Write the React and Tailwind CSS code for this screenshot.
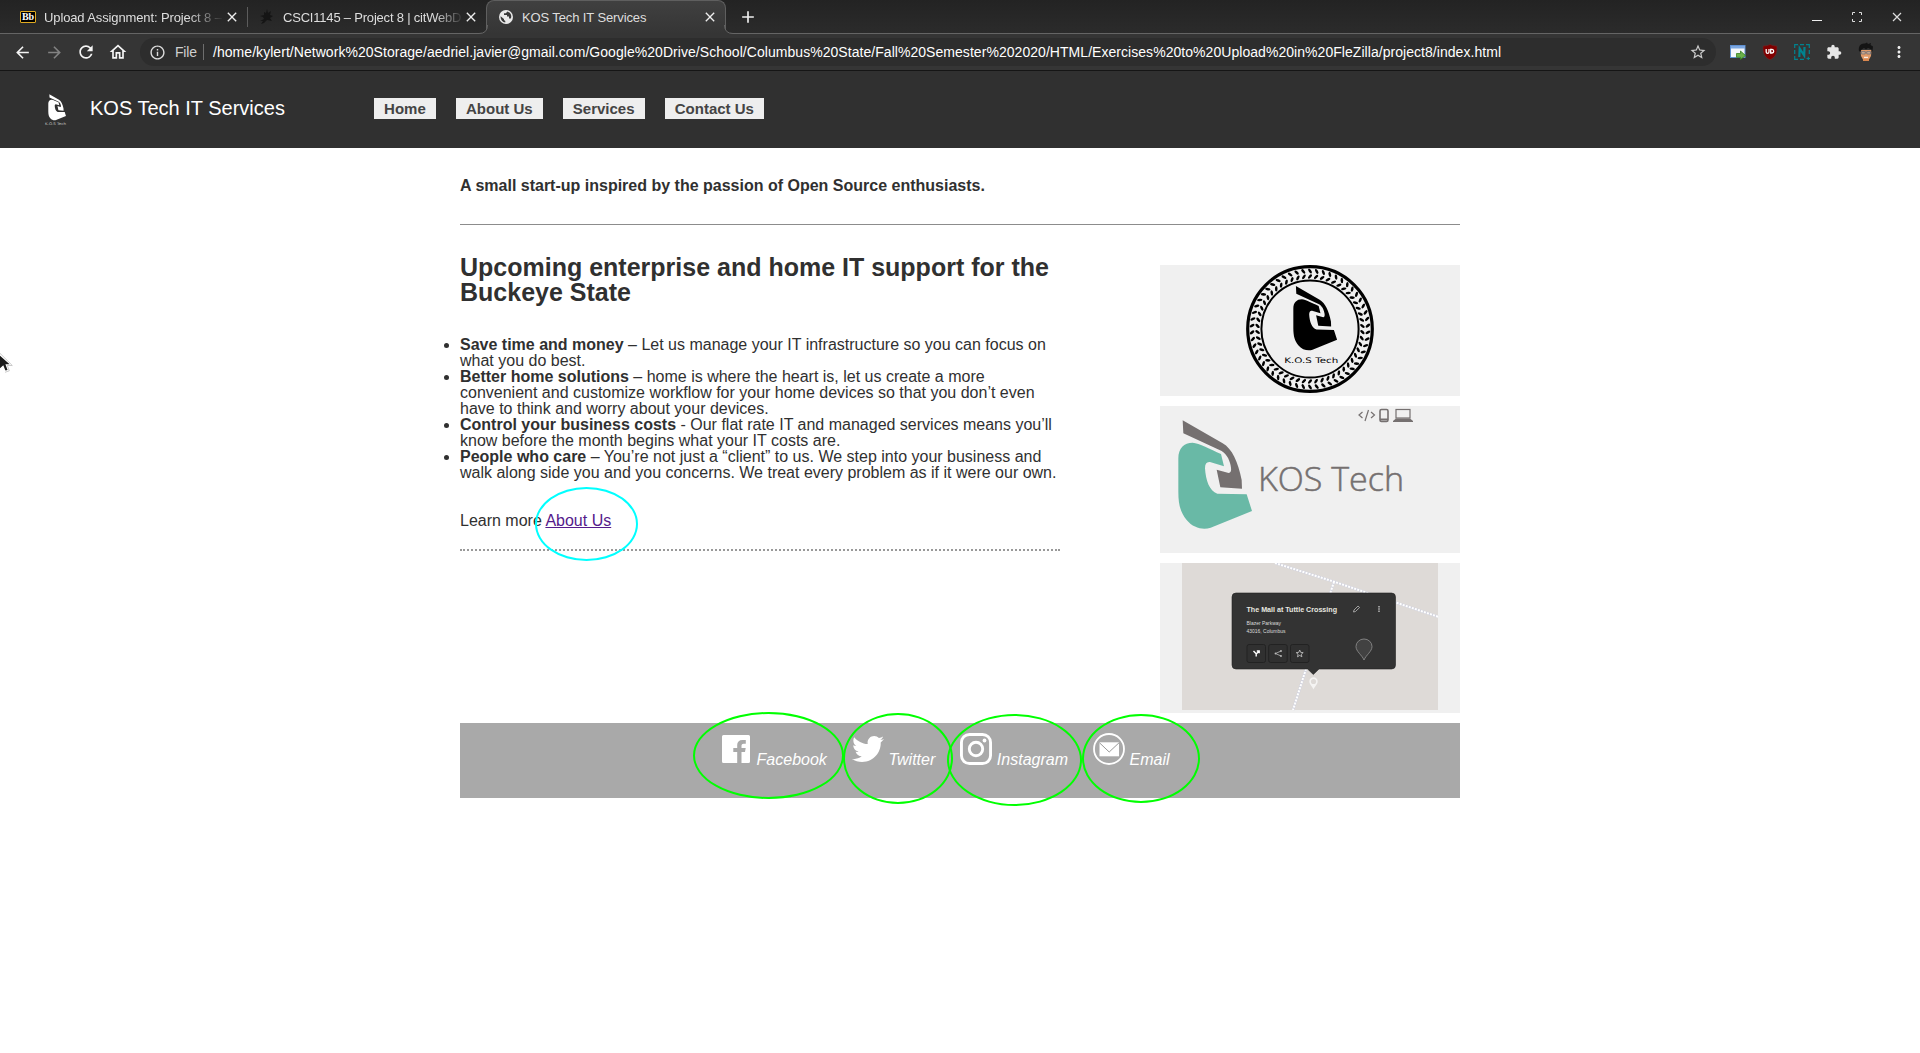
import React from "react";
import {
  MdArrowBack,
  MdArrowForward,
  MdRefresh,
  MdOutlineHome,
  MdInfoOutline,
  MdStarBorder,
  MdExtension,
  MdClose,
  MdAdd,
  MdMoreVert,
} from "react-icons/md";
import { FaTwitter } from "react-icons/fa";

const VISOR =
  "M98 61 L218 130 C246 146 264 185 275 240 L276 266 L211 262 L200 209 L236 219 Q245 218 243 203 C241 185 232 163 215 153 L100 100 Z";
const SHELL =
  "M85 175 C85 145 102 128 128 128 C148 130 180 147 213 162 L222 199 L180 186 Q165 184 165 205 C167 240 178 274 202 281 L290 283 L306 333 L182 383 C160 390 130 385 110 360 C92 338 85 315 85 275 Z";

function Helmet({ visor, shell, transform }) {
  return (
    <g transform={transform}>
      <path d={VISOR} fill={visor} />
      <path d={SHELL} fill={shell} />
    </g>
  );
}

function TabFoot({ flip }) {
  return (
    <svg
      className={flip ? "absolute -right-2 bottom-0" : "absolute -left-2 bottom-0 -scale-x-100"}
      width="9"
      height="9"
      viewBox="0 0 9 9"
    >
      <path d="M0 0 H0.5 Q0.5 8.5 9 8.5 V9 H0 Z" fill="#353535" />
      <path d="M0.5 0 Q0.5 8.5 9 8.5" fill="none" stroke="#656565" />
    </svg>
  );
}

function TabStrip() {
  return (
    <div className="flex h-[34px] border-b border-[#656565] bg-linear-to-b from-[#232323] to-[#2b2b2b] text-[13px] tracking-[-0.12px] text-[#dedede]">
      <div className="flex h-[33px] w-[247px] items-center pl-5">
        <div className="flex h-3 w-4 items-center justify-center rounded-[1px] border border-[#e0aa20] bg-black font-['Liberation_Serif',serif] text-[10px] leading-none font-bold text-white">
          Bb
        </div>
        <div className="mt-0.5 ml-2 w-[180px] mask-r-from-80% whitespace-nowrap">
          Upload Assignment: Project 8 –
        </div>
        <MdClose className="size-4 text-[#eeeeee]" />
      </div>
      <div className="mt-[7px] h-5 w-px bg-[#5c5c5c]" />
      <div className="flex h-[33px] w-[238px] items-center pl-3">
        <svg width="14" height="16" viewBox="0 0 14 16">
          <path
            d="M7 0 L8 4 L11 2 L10 6 L13 7 L10 9 L12 12 L7 11 L4 14 L1 15 L3 12 L0 12 L4 10 L3 8 L0 7 L4 6 L4 3 L6 4 Z"
            fill="#151515"
          />
        </svg>
        <div className="mt-0.5 ml-[9px] w-[181px] mask-r-from-84% tracking-[-0.2px] whitespace-nowrap">
          CSCI1145 – Project 8 | citWebD
        </div>
        <MdClose className="-ml-px size-4 text-[#eeeeee]" />
      </div>
      <div className="relative -mb-px flex h-[34px] w-[240px] items-center rounded-t-lg border-x border-t border-[#5f5f5f] bg-linear-to-b from-[#404040] to-[#353535] pb-px pl-3">
        <TabFoot />
        <TabFoot flip />
        <svg width="14" height="14" viewBox="0 0 14 14">
          <circle cx="7" cy="7" r="7" fill="#e8e8e8" />
          <path
            d="M1.6 6.2 L5 9 V10 L6.3 11 V12.6 C3.4 12.2 1.2 9.6 1.6 6.2 Z M8.2 1.6 L7 3.2 H5 V5 H8 V6.6 H10 V8.6 H11.8 C13 6 12 2.6 8.2 1.6 Z"
            fill="#383838"
          />
        </svg>
        <span className="mt-px ml-[9px] w-[180px]">KOS Tech IT Services</span>
        <MdClose className="size-4 text-[#eeeeee]" />
      </div>
      <MdAdd className="mt-[7px] ml-3 size-5 text-[#eeeeee]" />
      <div className="ml-auto flex h-[33px] items-center pr-[18px] text-[#dddddd]">
        <div className="mt-2 h-px w-[10px] bg-[#eeeeee]" />
        <svg className="ml-[30px]" width="10" height="10" viewBox="0 0 10 10" fill="none" stroke="currentColor">
          <path d="M.5 3V.5H3 M7 .5H9.5V3 M9.5 7V9.5H7 M3 9.5H.5V7" />
        </svg>
        <svg className="ml-[30px]" width="10" height="10" viewBox="0 0 10 10" fill="none" stroke="currentColor" strokeWidth="1.2">
          <path d="M1 1L9 9M9 1L1 9" />
        </svg>
      </div>
    </div>
  );
}

function Extensions() {
  return (
    <div className="ml-[14px] flex items-center gap-4">
      <svg width="16" height="16" viewBox="0 0 16 16">
        <rect x=".5" y="1.5" width="14.5" height="12" fill="#f4f6fa" stroke="#5e8fd0" />
        <path d="M1 2H15V4.500H1Z" fill="#7ba6e0" />
        <path d="M6.500 9.500H10.500V7L15.500 11.500L10.500 15.500V13.300H6.500Z" fill="#6ab04a" stroke="#35801c" strokeWidth=".8" />
      </svg>
      <svg width="16" height="16" viewBox="0 0 16 16">
        <path d="M8 .3C10 1.600 12.500 2 15 2C15.200 9 14 13 8 15.800C2 13 .8 9 1 2C3.500 2 6 1.600 8 .3Z" fill="#800000" stroke="#5e3030" strokeWidth=".6" />
        <path d="M4.200 5V8Q4.200 9.300 5.600 9.300Q7 9.300 7 8V5M8.700 5.400H10Q11.700 5.600 11.700 7.200Q11.700 8.800 10 9H8.700Z" fill="none" stroke="#fff" strokeWidth="1.300" />
      </svg>
      <svg width="16" height="16" viewBox="0 0 16 16" fill="none" stroke="#00838f">
        <path d="M.7 4V.7H4M6 .7H10M12 .7H15.300V4M15.300 6V10M.7 6V10M.7 12V15.300H4M6 15.300H10M12.500 14.500H16M14.300 12.700V16" strokeWidth="1.200" />
        <path d="M5.300 13L5.700 4.500L10.200 11.500L10.500 3" strokeWidth="2.200" />
      </svg>
      <MdExtension className="size-4 text-[#e6e6e6]" />
      <svg width="16" height="20" viewBox="0 0 16 20">
        <path d="M2.500 8H13.500L13 14L10.500 18.500H5.500L3 14Z" fill="#e09a68" />
        <path d="M5 17H11V19H5Z" fill="#d9874f" />
        <path d="M1 9C0 4 3 1 7 1.500L9 .5L10 2L13 1L12.500 3L15 4.500L14.500 9L13.500 10V7.500L10 6L8 7.500L6 6L3.500 7.500L2.500 10Z" fill="#141414" />
        <path d="M3.500 9.500H7.200V12H3.500ZM8.800 9.500H12.500V12H8.800ZM7.200 10.300H8.800" fill="#c8a68c" stroke="#6b7078" strokeWidth=".7" />
        <path d="M6 15.300H10" stroke="#fff" />
      </svg>
      <MdMoreVert className="size-[18px] text-[#eeeeee]" />
    </div>
  );
}

function Toolbar() {
  return (
    <div className="flex h-[37px] items-center border-b border-[#151515] bg-[#353535] pl-[13px]">
      <div className="flex items-center text-[18px] text-[#f5f5f5]">
        <MdArrowBack className="size-[19px]" />
        <MdArrowForward className="ml-[13px] size-[19px] text-[#828282]" />
        <MdRefresh className="ml-3 size-5" />
        <MdOutlineHome className="ml-3 size-5" />
      </div>
      <div className="ml-3 flex h-7 w-[1576px] items-center rounded-full bg-[#2d2d2d] pr-[9px] pl-[9px] text-[14px] text-white">
        <MdInfoOutline className="size-[17px] text-[#dddddd]" />
        <span className="ml-[9px] w-[28px] tracking-[-0.2px] text-[#cfcfcf]">File</span>
        <div className="h-4 w-px bg-[#6e6e6e]" />
        <span className="ml-[9px] tracking-[0.047px] whitespace-nowrap">
          /home/kylert/Network%20Storage/aedriel.javier@gmail.com/Google%20Drive/School/Columbus%20State/Fall%20Semester%202020/HTML/Exercises%20to%20Upload%20in%20FleZilla/project8/index.html
        </span>
        <MdStarBorder className="ml-auto size-[18px] text-[#cccccc]" />
      </div>
      <Extensions />
    </div>
  );
}

function SiteHeader() {
  return (
    <header className="flex h-[77px] items-center bg-[#303030] pl-[44px]">
      <svg width="24" height="34" viewBox="0 0 24 34" className="mt-px">
        <Helmet visor="#fff" shell="#fff" transform="translate(-2.500 -3.600) scale(.08)" />
        <text x="1" y="32" fontSize="3.600" fill="#c5c5c5" textLength="21" lengthAdjust="spacingAndGlyphs" fontFamily="DejaVu Sans, sans-serif">
          K.O.S Tech
        </text>
      </svg>
      <h1 className="mb-1 ml-[22px] w-[284px] text-[20px] leading-6 text-white">KOS Tech IT Services</h1>
      <nav className="mb-[3px] flex gap-5 text-[15px] leading-[21px] font-bold text-[#444444]">
        {["Home", "About Us", "Services", "Contact Us"].map((label) => (
          <a key={label} className="bg-[#eeeeee] px-[10.1px]">
            {label}
          </a>
        ))}
      </nav>
    </header>
  );
}

const POINTS = [
  ["Save time and money", " – Let us manage your IT infrastructure so you can focus on what you do best."],
  [
    "Better home solutions",
    " – home is where the heart is, let us create a more convenient and customize workflow for your home devices so that you don’t even have to think and worry about your devices.",
  ],
  [
    "Control your business costs",
    " - Our flat rate IT and managed services means you’ll know before the month begins what your IT costs are.",
  ],
  [
    "People who care",
    " – You’re not just a “client” to us. We step into your business and walk along side you and you concerns. We treat every problem as if it were our own.",
  ],
];

function Article() {
  return (
    <article className="w-[600px] pt-[30px]">
      <h2 className="text-[25px] leading-[25px] font-bold">
        Upcoming enterprise and home IT support for the Buckeye State
      </h2>
      <ul className="mt-8 list-disc leading-4">
        {POINTS.map(([lead, rest]) => (
          <li key={lead}>
            <b>{lead}</b>
            {rest}
          </li>
        ))}
      </ul>
      <p className="mt-8 leading-4">
        Learn more{" "}
        <span className="relative">
          <a className="text-[#551a8b] underline">About Us</a>
          <span className="absolute -top-[25px] -left-[10px] h-[74px] w-[103px] rounded-[50%] border-2 border-[#00ffff]" />
        </span>
      </p>
      <div className="mt-[20px] border-t-2 border-dotted border-[#999999]" />
    </article>
  );
}

const LEAVES = Array.from({ length: 54 }, (_, i) => (i * 360) / 54);

function Badge() {
  return (
    <svg width="300" height="131" viewBox="0 0 300 131" className="block bg-[#f0f0f0]">
      <g fill="none" stroke="#000">
        <circle cx="150" cy="64" r="62.300" strokeWidth="3.200" />
        <circle cx="150" cy="64" r="48.600" strokeWidth="2" />
      </g>
      {LEAVES.map((a) => (
        <g key={a} transform={`rotate(${a} 150 64)`}>
          <ellipse cx="150" cy="6" rx="2.700" ry="1.300" transform="rotate(55 150 6)" />
          <ellipse cx="150" cy="11.500" rx="2.700" ry="1.300" transform="rotate(-50 150 11.500)" />
        </g>
      ))}
      <Helmet visor="#000" shell="#000" transform="translate(116.500 8.900) scale(.198)" />
      <text x="124.300" y="97.600" fontSize="7.600" textLength="54" lengthAdjust="spacingAndGlyphs" fontFamily="DejaVu Sans, sans-serif">
        K.O.S Tech
      </text>
    </svg>
  );
}

function Banner() {
  return (
    <svg width="300" height="147" viewBox="0 0 300 147" className="block bg-[#f0f0f0]">
      <Helmet visor="#757070" shell="#69b9a6" transform="translate(-10 -6) scale(.33333)" />
      <text
        x="98"
        y="84.700"
        fontSize="32.600"
        fontWeight="300"
        fill="#757070"
        stroke="#757070"
        strokeWidth=".5"
        textLength="146"
        lengthAdjust="spacingAndGlyphs"
        fontFamily="Open Sans, sans-serif"
      >
        KOS Tech
      </text>
      <g fill="none" stroke="#757070" strokeWidth="1.200">
        <path d="M202.500 6L199 9L202.500 12M211 6L214.500 9L211 12M208.500 4L205 15" />
        <rect x="220" y="3.500" width="8" height="12" rx="1.500" strokeWidth="1.600" />
        <path d="M220 13.500H228" strokeWidth="2" />
        <rect x="236" y="3.500" width="14" height="8.500" />
      </g>
      <path d="M236 12.500H250L253 15V16H233V15Z" fill="#757070" />
    </svg>
  );
}

function MapCard() {
  return (
    <svg width="300" height="150" viewBox="0 0 300 150" className="block bg-[#f0f0f0]" fontFamily="Liberation Sans, sans-serif">
      <rect x="22" width="256" height="147" fill="#dedad7" />
      <g fill="none">
        <path d="M115 0L174 18.700L278 53.700M174 18.700L170 31M146 106L133 147" stroke="#d3d4df" strokeWidth="2.600" />
        <path d="M115 0L174 18.700L278 53.700M174 18.700L170 31M146 106L133 147" stroke="#fff" strokeWidth="2" strokeDasharray="2 1.200" />
      </g>
      <path d="M76 30H231.500Q235.500 30 235.500 34V102Q235.500 106 231.500 106H159L153.300 111.500L147.600 106H76Q72 106 72 102V34Q72 30 76 30Z" fill="#333" stroke="#222" strokeWidth=".6" />
      <text x="86.500" y="49.300" fontSize="7.200" fontWeight="700" fill="#e8e8e0" textLength="90.500" lengthAdjust="spacingAndGlyphs">
        The Mall at Tuttle Crossing
      </text>
      <g fontSize="5" fill="#dcdcdc">
        <text x="86.500" y="61.800" textLength="34.500" lengthAdjust="spacingAndGlyphs">Blazer Parkway</text>
        <text x="86.500" y="69.800" textLength="39" lengthAdjust="spacingAndGlyphs">43016, Columbus</text>
      </g>
      <g fill="#303030" stroke="#222">
        <rect x="87" y="81.500" width="18.500" height="18" rx="2" />
        <rect x="108.700" y="81.500" width="18.500" height="18" rx="2" />
        <rect x="130.500" y="81.500" width="18.500" height="18" rx="2" />
      </g>
      <path d="M93.500 88L96.200 90.800V93.500M96.200 91L99 88.300M96.800 88H99.200V90.200" fill="none" stroke="#fff" strokeWidth="1.400" />
      <path d="M121 88L115.500 90.500L121 93" fill="none" stroke="#bbb" strokeWidth=".8" />
      <g fill="#bbb">
        <circle cx="121" cy="88" r=".9" />
        <circle cx="115.500" cy="90.500" r=".9" />
        <circle cx="121" cy="93" r=".9" />
      </g>
      <path d="M139.700 87L140.700 89.400L143.200 89.600L141.300 91.200L141.900 93.800L139.700 92.400L137.500 93.800L138.100 91.200L136.200 89.600L138.700 89.400Z" fill="none" stroke="#bbb" strokeWidth=".9" />
      <path d="M193.500 49L194 47L198 43L199.600 44.500L195.500 48.500Z" fill="none" stroke="#bbb" strokeWidth=".8" />
      <path d="M219 43V49" stroke="#ccc" strokeWidth="1.300" strokeDasharray="1.400 .9" />
      <path d="M204 97C202 92 196 88.500 196 83.500A8 7.500 0 0 1 212 83.500C212 88.500 206 92 204 97Z" fill="#424242" stroke="#888" strokeWidth=".9" />
      <path d="M153.500 126.500C152.500 123.500 149.300 121.500 149.300 118.500A4.200 4.200 0 0 1 157.700 118.500C157.700 121.500 154.500 123.500 153.500 126.500Z" fill="#f5f4f3" />
      <circle cx="153.500" cy="118.500" r="2.600" fill="#dedad7" />
    </svg>
  );
}

function FacebookIcon() {
  return (
    <svg width="32" height="32" viewBox="0 0 32 32">
      <path
        d="M3.500 2H28.500Q30 2 30 3.500V28.500Q30 30 28.500 30H21.500V19H25L25.700 15H21.500V12.500Q21.500 10.700 23.500 10.700H25.800V7H22.500C19 7 17.200 9 17.200 12V15H13.300V19H17.200V30H3.500Q2 30 2 28.500V3.500Q2 2 3.500 2Z"
        fill="#fff"
      />
    </svg>
  );
}

function InstagramIcon() {
  return (
    <svg width="32" height="32" viewBox="0 0 32 32" fill="none" stroke="#fff" strokeWidth="2.900">
      <rect x="1.450" y="1.450" width="29.100" height="29.100" rx="8" />
      <circle cx="16" cy="16" r="6.700" />
      <circle cx="24.500" cy="7.500" r="1.900" fill="#fff" stroke="none" />
    </svg>
  );
}

function EmailIcon() {
  return (
    <svg width="32" height="32" viewBox="0 0 32 32">
      <circle cx="16" cy="16" r="15" fill="none" stroke="#fff" strokeWidth="1.800" />
      <rect x="6.500" y="9.300" width="19.500" height="14" fill="#fff" />
      <path d="M6.500 9.800L16.200 19L26 9.800" fill="none" stroke="#999" strokeWidth="1" />
    </svg>
  );
}

const SOCIAL = [
  { label: "Facebook", icon: <FacebookIcon />, ring: "-left-[27px] -top-[11px] w-[151px] h-[87px]" },
  { label: "Twitter", icon: <FaTwitter className="size-8 text-white" />, ring: "-left-[9px] -top-[10px] w-[110px] h-[91px]" },
  { label: "Instagram", icon: <InstagramIcon />, ring: "-left-[13px] -top-[9px] w-[135px] h-[92px]" },
  { label: "Email", icon: <EmailIcon />, ring: "-left-[11px] -top-[9px] w-[118px] h-[89px]" },
];

function SiteFooter() {
  return (
    <footer className="mt-[10px] flex h-[75px] bg-[#a9a9a9] pl-[260px] text-white italic">
      {SOCIAL.map(({ label, icon, ring }) => (
        <a key={label} className="relative mr-[25px] flex pt-[10px]">
          {icon}
          <span className="mt-[18px] ml-[4.6px] leading-[18px]">{label}</span>
          <span className={`absolute rounded-[50%] border-2 border-[#00ff00] ${ring}`} />
        </a>
      ))}
    </footer>
  );
}

export default function App() {
  return (
    <div className="relative h-[1053px] w-[1920px] overflow-hidden bg-white font-['Liberation_Sans',Arial,sans-serif] text-[#303030]">
      <TabStrip />
      <Toolbar />
      <SiteHeader />
      <main className="mx-auto w-[1000px] text-[16px]">
        <p className="pt-[29px] leading-[18px] font-bold">A small start-up inspired by the passion of Open Source enthusiasts.</p>
        <div className="mt-[29px] h-px bg-[#8c8c8c]" />
        <div className="flex justify-between">
          <Article />
          <aside className="flex flex-col gap-[10px] pt-10">
            <Badge />
            <Banner />
            <MapCard />
          </aside>
        </div>
        <SiteFooter />
      </main>
      <svg className="absolute top-[352px] left-0" width="14" height="22" viewBox="0 0 14 22">
        <path d="M-3 0L11.500 13H6.500L8.500 18.500L5 19.500L3 14.500L-1 18Z" fill="#1a1a1a" stroke="#fff" strokeWidth="1.500" />
        <path d="M0 1.300L12.300 13.500H7.300L9.300 18.800L5 20.300" fill="none" stroke="#aaa" strokeWidth=".6" />
      </svg>
    </div>
  );
}
